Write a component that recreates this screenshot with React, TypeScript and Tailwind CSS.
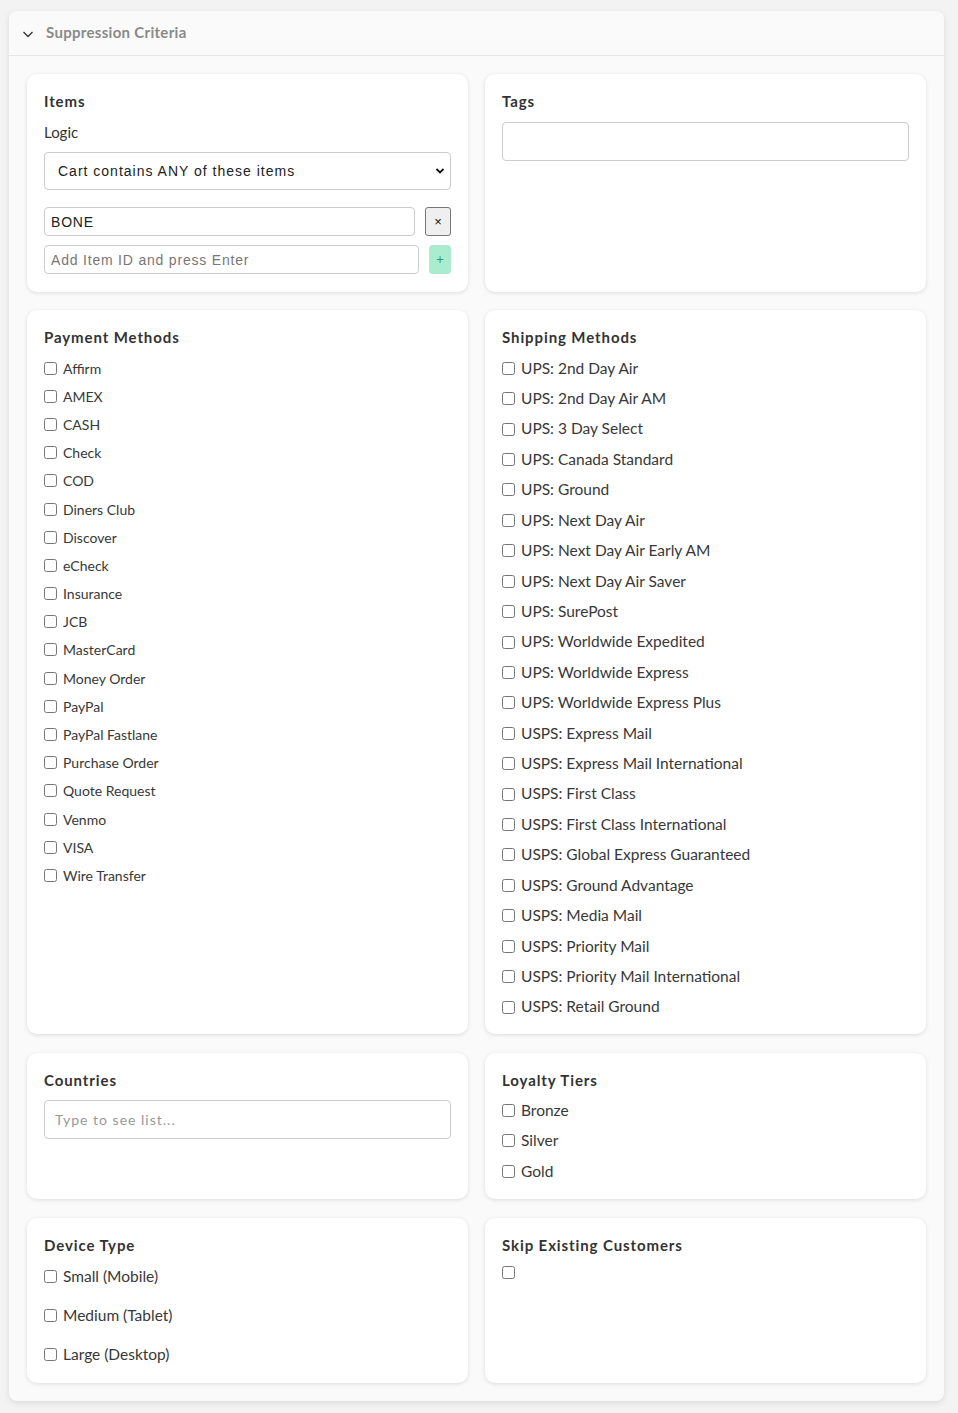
import React from "react";

const payment = ["Affirm","AMEX","CASH","Check","COD","Diners Club","Discover","eCheck","Insurance","JCB","MasterCard","Money Order","PayPal","PayPal Fastlane","Purchase Order","Quote Request","Venmo","VISA","Wire Transfer"];
const shipping = ["UPS: 2nd Day Air","UPS: 2nd Day Air AM","UPS: 3 Day Select","UPS: Canada Standard","UPS: Ground","UPS: Next Day Air","UPS: Next Day Air Early AM","UPS: Next Day Air Saver","UPS: SurePost","UPS: Worldwide Expedited","UPS: Worldwide Express","UPS: Worldwide Express Plus","USPS: Express Mail","USPS: Express Mail International","USPS: First Class","USPS: First Class International","USPS: Global Express Guaranteed","USPS: Ground Advantage","USPS: Media Mail","USPS: Priority Mail","USPS: Priority Mail International","USPS: Retail Ground"];

function Check({ label, h, size }: { label?: string; h: string; size: string }) {
  return (
    <label className={`flex items-center ${h} ${size} text-[#383838]`}>
      <input type="checkbox" className="w-[13px] h-[13px] mr-[6px] shrink-0" />
      {label}
    </label>
  );
}

function Card({ title, children, className = "" }: { title: string; children?: React.ReactNode; className?: string }) {
  return (
    <div className={`bg-white rounded-[10px] shadow-[0_1px_4px_rgba(0,0,0,0.12)] px-[17px] pt-[17px] ${className}`}>
      <div className="text-[15px] font-bold tracking-[0.9px] text-[#333] leading-[20px]">{title}</div>
      {children}
    </div>
  );
}

export default function App() {
  return (
    <div className="min-h-[1413px] bg-[#f3f3f3] pt-[11px] pl-[9px] pr-[14px]" style={{ fontFamily: "Lato, 'Noto Sans', sans-serif" }}>
      <div className="bg-[#fafafa] rounded-[8px] shadow-[0_2px_6px_rgba(0,0,0,0.1)] w-[935px]">
        <div className="h-[45px] flex items-center border-b border-[#e6e6e6] pl-[13px] pb-[2px]">
          <svg width="12" height="12" viewBox="0 0 12 12" className="mr-[12px] mt-[4px]">
            <path d="M1.5 4 L6 8.5 L10.5 4" fill="none" stroke="#333" strokeWidth="1.3" />
          </svg>
          <span className="text-[15px] font-bold tracking-[0.3px] text-[#8a8a8a]">Suppression Criteria</span>
        </div>
        <div className="grid grid-cols-2 gap-x-[17px] gap-y-[18px] p-[18px]">
          <Card title="Items" className="h-[218px]">
            <div className="text-[15px] text-[#333] mt-[11px] leading-[20px]">Logic</div>
            <div className="relative mt-[10px]">
              <select className="appearance-none w-full h-[38px] border border-[#ccc] rounded-[4px] pl-[13px] text-[14px] tracking-[1px] text-[#222] bg-white" style={{ fontFamily: "'Liberation Sans', Arial, sans-serif" }}>
                <option>Cart contains ANY of these items</option>
              </select>
              <svg width="10" height="10" viewBox="0 0 10 10" className="absolute right-[6px] top-[14px] pointer-events-none">
                <path d="M1.5 3 L5 6.5 L8.5 3" fill="none" stroke="#111" strokeWidth="1.8" />
              </svg>
            </div>
            <div className="flex items-center mt-[17px]">
              <input readOnly value="BONE" className="w-[371px] h-[29px] border border-[#ccc] rounded-[4px] px-[6px] text-[14px] tracking-[0.8px] text-[#222]" style={{ fontFamily: "'Liberation Sans', Arial, sans-serif" }} />
              <button className="ml-auto w-[26px] h-[29px] bg-[#efefef] border border-[#767676] rounded-[3px] text-[13px] text-[#111] flex items-center justify-center" style={{ fontFamily: "'Liberation Sans', Arial, sans-serif" }}>×</button>
            </div>
            <div className="flex items-center mt-[9px]">
              <input placeholder="Add Item ID and press Enter" className="w-[375px] h-[29px] border border-[#ccc] rounded-[4px] px-[6px] text-[14px] tracking-[0.8px] text-[#222] placeholder:text-[#777]" style={{ fontFamily: "'Liberation Sans', Arial, sans-serif" }} />
              <button className="ml-auto w-[22px] h-[29px] bg-[#a9ecd0] rounded-[4px] text-[13px] text-[#2a9a6a] flex items-center justify-center">+</button>
            </div>
          </Card>
          <Card title="Tags" className="h-[218px]">
            <input className="mt-[11px] w-full h-[39px] border border-[#ccc] rounded-[4px] bg-white" />
          </Card>

          <Card title="Payment Methods" className="h-[724px]">
            <div className="mt-[7px] flex flex-col">
              {payment.map((p) => (
                <Check key={p} label={p} h="h-[28.2px]" size="text-[14px]" />
              ))}
            </div>
          </Card>
          <Card title="Shipping Methods" className="h-[724px]">
            <div className="mt-[6px] flex flex-col">
              {shipping.map((p) => (
                <Check key={p} label={p} h="h-[30.43px]" size="text-[15.5px]" />
              ))}
            </div>
          </Card>

          <Card title="Countries" className="h-[146px] mt-[1px]">
            <input placeholder="Type to see list..." className="mt-[10px] w-full h-[39px] border border-[#ccc] rounded-[4px] px-[10px] text-[14px] tracking-[1px] bg-white placeholder:text-[#999]" />
          </Card>
          <Card title="Loyalty Tiers" className="h-[146px] mt-[1px]">
            <div className="flex flex-col mt-[5px]">
              {["Bronze", "Silver", "Gold"].map((p) => (
                <Check key={p} label={p} h="h-[30.5px]" size="text-[15.5px]" />
              ))}
            </div>
          </Card>

          <Card title="Device Type" className="h-[165px] mt-[1px]">
            <div className="flex flex-col mt-[2px]">
              {["Small (Mobile)", "Medium (Tablet)", "Large (Desktop)"].map((p) => (
                <Check key={p} label={p} h="h-[39px]" size="text-[15.5px]" />
              ))}
            </div>
          </Card>
          <Card title="Skip Existing Customers" className="h-[165px] mt-[1px]">
            <div className="mt-[11px] flex">
              <input type="checkbox" className="w-[13px] h-[13px]" />
            </div>
          </Card>
        </div>
      </div>
    </div>
  );
}
